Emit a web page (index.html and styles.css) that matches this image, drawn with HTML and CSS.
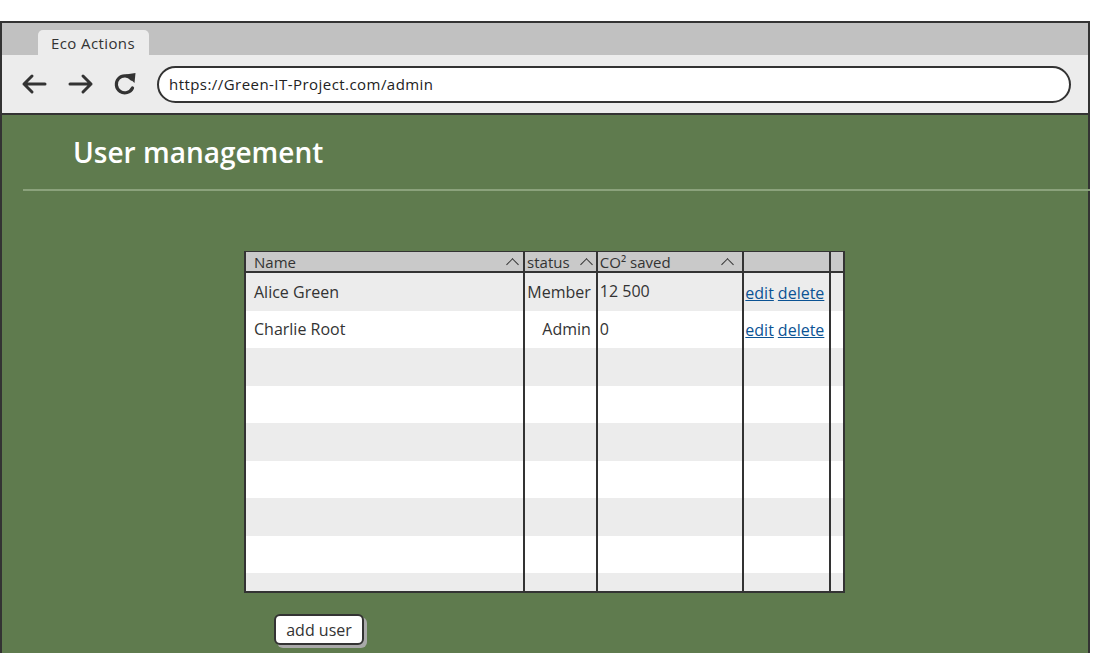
FILE: index.html
```html
<!DOCTYPE html>
<html>
<head>
<meta charset="utf-8">
<title>Eco Actions</title>
<link rel="stylesheet" href="styles.css">
</head>
<body>
<div class="window">
  <div class="tabbar">
    <div class="tab">Eco Actions</div>
  </div>
  <div class="toolbar">
    <svg class="icon back" width="26" height="22" viewBox="0 0 26 22"><path d="M24 11 H3 M11 3 L3 11 L11 19" fill="none" stroke="#333" stroke-width="3" stroke-linecap="round" stroke-linejoin="round"/></svg>
    <svg class="icon fwd" width="26" height="22" viewBox="0 0 26 22"><path d="M2 11 H23 M15 3 L23 11 L15 19" fill="none" stroke="#333" stroke-width="3" stroke-linecap="round" stroke-linejoin="round"/></svg>
    <svg class="icon reload" width="26" height="26" viewBox="0 0 26 26"><path d="M19.5 8 A8.5 8.5 0 1 0 20.5 17" fill="none" stroke="#333" stroke-width="3.2" stroke-linecap="round"/><path d="M13.5 3.5 L23.5 2 L22.5 12 Z" fill="#333"/></svg>
    <div class="address">https://Green-IT-Project.com/admin</div>
  </div>
  <div class="content">
    <div class="titlebar"><h1 class="title">User management</h1></div>
    <div class="divider"></div>
    <div class="table">
      <div class="row head">
        <div class="cell c1"><span>Name</span><span class="caret"></span></div>
        <div class="cell c2"><span>status</span><span class="caret"></span></div>
        <div class="cell c3"><span>CO² saved</span><span class="caret"></span></div>
        <div class="cell c4"></div>
        <div class="cell c5"></div>
      </div>
      <div class="row alt">
        <div class="cell c1">Alice Green</div>
        <div class="cell c2 right">Member</div>
        <div class="cell c3 top">12 500</div>
        <div class="cell c4 links"><a href="#">edit</a> <a href="#">delete</a></div>
        <div class="cell c5"></div>
      </div>
      <div class="row">
        <div class="cell c1">Charlie Root</div>
        <div class="cell c2 right">Admin</div>
        <div class="cell c3 top">0</div>
        <div class="cell c4 links"><a href="#">edit</a> <a href="#">delete</a></div>
        <div class="cell c5"></div>
      </div>
      <div class="row alt"><div class="cell c1"></div><div class="cell c2"></div><div class="cell c3"></div><div class="cell c4"></div><div class="cell c5"></div></div>
      <div class="row"><div class="cell c1"></div><div class="cell c2"></div><div class="cell c3"></div><div class="cell c4"></div><div class="cell c5"></div></div>
      <div class="row alt"><div class="cell c1"></div><div class="cell c2"></div><div class="cell c3"></div><div class="cell c4"></div><div class="cell c5"></div></div>
      <div class="row"><div class="cell c1"></div><div class="cell c2"></div><div class="cell c3"></div><div class="cell c4"></div><div class="cell c5"></div></div>
      <div class="row alt"><div class="cell c1"></div><div class="cell c2"></div><div class="cell c3"></div><div class="cell c4"></div><div class="cell c5"></div></div>
      <div class="row"><div class="cell c1"></div><div class="cell c2"></div><div class="cell c3"></div><div class="cell c4"></div><div class="cell c5"></div></div>
      <div class="row alt last"><div class="cell c1"></div><div class="cell c2"></div><div class="cell c3"></div><div class="cell c4"></div><div class="cell c5"></div></div>
    </div>
    <div class="actions"><button class="btn">add user</button></div>
  </div>
</div>
</body>
</html>
```
FILE: styles.css
```css
html, body {
  margin: 0;
  padding: 0;
  background: #fff;
  height: 100%;
  overflow: hidden;
}
body {
  font-family: "Open Sans", "Liberation Sans", sans-serif;
  color: #333;
}
.window {
  margin-top: 21px;
  width: 1086px;
  height: 640px;
  border: 2px solid #333;
  border-bottom: none;
  display: flex;
  flex-direction: column;
}
.tabbar {
  height: 32px;
  background: #c1c1c1;
  display: flex;
  align-items: flex-end;
  padding-left: 36px;
}
.tab {
  width: 111px;
  height: 25px;
  background: #ececec;
  border-radius: 5px 5px 0 0;
  font-size: 15px;
  letter-spacing: 0.4px;
  line-height: 26px;
  padding-left: 13px;
  box-sizing: border-box;
  color: #333;
  white-space: nowrap;
}
.toolbar {
  height: 58px;
  background: #ececec;
  border-bottom: 2px solid #333;
  display: flex;
  align-items: center;
  padding-left: 19px;
}
.icon {
  flex: none;
}
.back { margin-right: 21px; }
.fwd { margin-right: 18px; }
.reload { margin-right: 19px; }
.address {
  width: 914px;
  height: 37px;
  box-sizing: border-box;
  border: 2px solid #333;
  border-radius: 19px;
  background: #fff;
  font-size: 15px;
  letter-spacing: 0.45px;
  line-height: 33px;
  padding-left: 10px;
  color: #222;
  white-space: nowrap;
}
.content {
  flex: 1;
  background: #5f7b4e;
  display: flex;
  flex-direction: column;
}
.titlebar {
  height: 74px;
  display: flex;
  align-items: center;
  padding-left: 71px;
}
.title {
  margin: 0;
  font-size: 28px;
  font-weight: 600;
  color: #fff;
  line-height: 34px;
  position: relative;
  top: 0;
}
.divider {
  height: 2px;
  background: #8ba27c;
  margin-left: 21px;
  margin-right: -2px;
}
.table {
  margin-top: 60px;
  margin-left: 242px;
  width: 601px;
  border: 2px solid #333;
  border-top-width: 1px;
  box-sizing: border-box;
  display: flex;
  flex-direction: column;
}
.row {
  display: flex;
  height: 37.5px;
  background: #fff;
  flex: none;
}
.row.alt {
  background: #ececec;
}
.row.last {
  height: 18px;
}
.row.head {
  height: 21px;
  box-sizing: border-box;
  background: #c9c9c9;
  border-bottom: 2px solid #333;
}
.cell {
  box-sizing: border-box;
  border-right: 2px solid #333;
  display: flex;
  align-items: center;
  font-size: 16px;
  color: #333;
  white-space: nowrap;
}
.head .cell {
  font-size: 15px;
  justify-content: space-between;
  line-height: 18px;
}
.c1 { width: 280px; padding-left: 8px; }
.c2 { width: 73px; padding-left: 2px; padding-right: 5px; }
.c3 { width: 147px; padding-left: 2px; }
.c4 { width: 87px; padding-left: 1px; }
.c5 { width: 12px; border-right: none; }
.head .c1 { padding-right: 4px; }
.head .c2 { padding-right: 3px; }
.head .c3 { padding-right: 8px; }
.right { justify-content: flex-end; }
.top { align-items: flex-start; padding-top: 7px; }
.links { padding-top: 2px; }
.links a {
  color: #0b5394;
  text-decoration: underline;
  margin-right: 4px;
}
.caret {
  width: 8px;
  height: 8px;
  border-left: 1.8px solid #333;
  border-top: 1.8px solid #333;
  transform: rotate(45deg);
  margin-top: 5px;
  margin-right: 2px;
}
.actions {
  margin-top: 21px;
  margin-left: 272px;
}
.btn {
  width: 90px;
  height: 31px;
  background: #fff;
  border: 2px solid #333;
  border-radius: 6px;
  box-shadow: 3px 3px 0 #a9a9a9;
  font-family: "Open Sans", "Liberation Sans", sans-serif;
  font-size: 16px;
  color: #333;
  padding: 0;
}
```
